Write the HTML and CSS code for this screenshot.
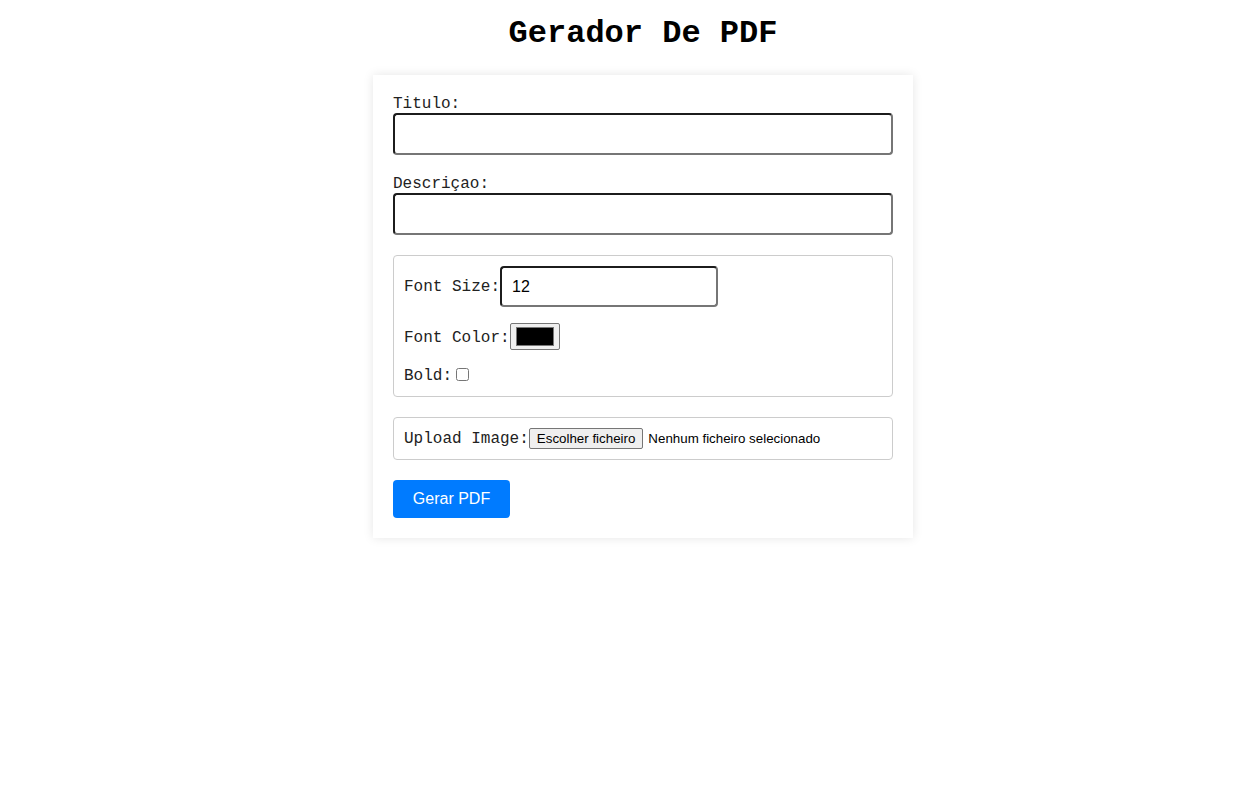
FILE: index.html
```html
<!DOCTYPE html>
<html lang="pt">
<head>
<meta charset="utf-8">
<title>Gerador De PDF</title>
<link rel="stylesheet" href="styles.css">
</head>
<body>
<h1 class="title">Gerador De PDF</h1>
<form class="card">
  <label class="label" for="titulo">Titulo:</label>
  <input class="text-input" id="titulo" type="text">
  <label class="label" for="desc">Descriçao:</label>
  <input class="text-input" id="desc" type="text">
  <div class="box options">
    <div class="row row-size">
      <label class="inline-label" for="size">Font Size:</label>
      <input class="size-input" id="size" type="number" value="12">
    </div>
    <div class="row row-color">
      <label class="inline-label" for="color">Font Color:</label>
      <input class="color-input" id="color" type="color" value="#000000">
    </div>
    <div class="row row-bold">
      <label class="inline-label" for="bold">Bold:</label>
      <input class="check" id="bold" type="checkbox">
    </div>
  </div>
  <div class="box upload">
    <span class="inline-label">Upload Image:</span>
    <button type="button" class="file-btn">Escolher ficheiro</button>
    <span class="file-name">Nenhum ficheiro selecionado</span>
  </div>
  <button type="button" class="submit">Gerar PDF</button>
</form>
</body>
</html>
```

FILE: styles.css
```css
html, body {
  margin: 0;
  padding: 0;
  background: #fff;
}
body {
  padding-left: 36px;
  font-family: "Liberation Mono", "Courier New", monospace;
  color: #000;
}
.title {
  margin: 16px 0 0;
  height: 59px;
  font-size: 32px;
  font-weight: bold;
  text-align: center;
  line-height: 36px;
}
.card {
  width: 540px;
  box-sizing: border-box;
  margin: 0 auto 20px;
  padding: 20px;
  background: #fff;
  box-shadow: 0 0 10px rgba(0, 0, 0, 0.1);
  display: flex;
  flex-direction: column;
  align-items: flex-start;
}
.label {
  display: block;
  font-size: 16px;
  line-height: 18px;
  color: #222;
}
.text-input {
  width: 500px;
  height: 42px;
  box-sizing: border-box;
  margin: 0 0 20px;
  padding: 10px;
  font-family: Arial, "Liberation Sans", sans-serif;
  font-size: 16px;
  border: 2px solid;
  border-color: #1c1c1c #767676 #767676 #1c1c1c;
  border-radius: 4px;
  background: #fff;
}
.box {
  width: 500px;
  box-sizing: border-box;
  border: 1px solid #ccc;
  border-radius: 4px;
  padding: 10px;
  margin-bottom: 20px;
}
.options {
  display: flex;
  flex-direction: column;
  gap: 16px;
  height: 142px;
  flex-shrink: 0;
}
.row {
  display: flex;
  align-items: center;
}
.row-size { height: 41px; }
.row-color { height: 27px; align-items: flex-end; }
.row-bold { height: 19px; align-items: flex-end; }
.inline-label {
  font-size: 16px;
  line-height: 18px;
  color: #222;
}
.size-input {
  width: 218px;
  height: 41px;
  box-sizing: border-box;
  margin: 0;
  padding: 10px;
  font-family: Arial, "Liberation Sans", sans-serif;
  font-size: 16px;
  border: 2px solid;
  border-color: #1c1c1c #767676 #767676 #1c1c1c;
  border-radius: 4px;
  background: #fff;
  -moz-appearance: textfield;
}
.size-input::-webkit-inner-spin-button,
.size-input::-webkit-outer-spin-button {
  -webkit-appearance: none;
  margin: 0;
}
.color-input {
  width: 50px;
  height: 27px;
  box-sizing: border-box;
  margin: 0;
  padding: 1px 2px;
  border: 1px solid #767676;
  border-radius: 2px;
  background: #efefef;
}
.color-input::-webkit-color-swatch-wrapper {
  padding: 2px 3px;
}
.color-input::-webkit-color-swatch {
  border: 1px solid #777;
}
.row-color .inline-label { margin-bottom: 3px; }
.check {
  width: 13px;
  height: 13px;
  margin: 0 0 4px 4px;
}
.upload {
  display: flex;
  align-items: center;
  height: 43px;
  padding: 0 10px;
  flex-shrink: 0;
}
.file-btn {
  font-family: Arial, "Liberation Sans", sans-serif;
  font-size: 13.33px;
  color: #000;
  background: #efefef;
  border: 1px solid #767676;
  border-radius: 2px;
  padding: 1px 7px;
  height: 21px;
  margin: 0 5px 0 0;
}
.file-name {
  font-family: Arial, "Liberation Sans", sans-serif;
  font-size: 13.33px;
  color: #000;
}
.submit {
  width: 117px;
  height: 38px;
  margin-top: 0;
  background: #007bff;
  color: #fff;
  border: none;
  border-radius: 4px;
  font-family: Arial, "Liberation Sans", sans-serif;
  font-size: 16px;
  padding: 0;
}
```
